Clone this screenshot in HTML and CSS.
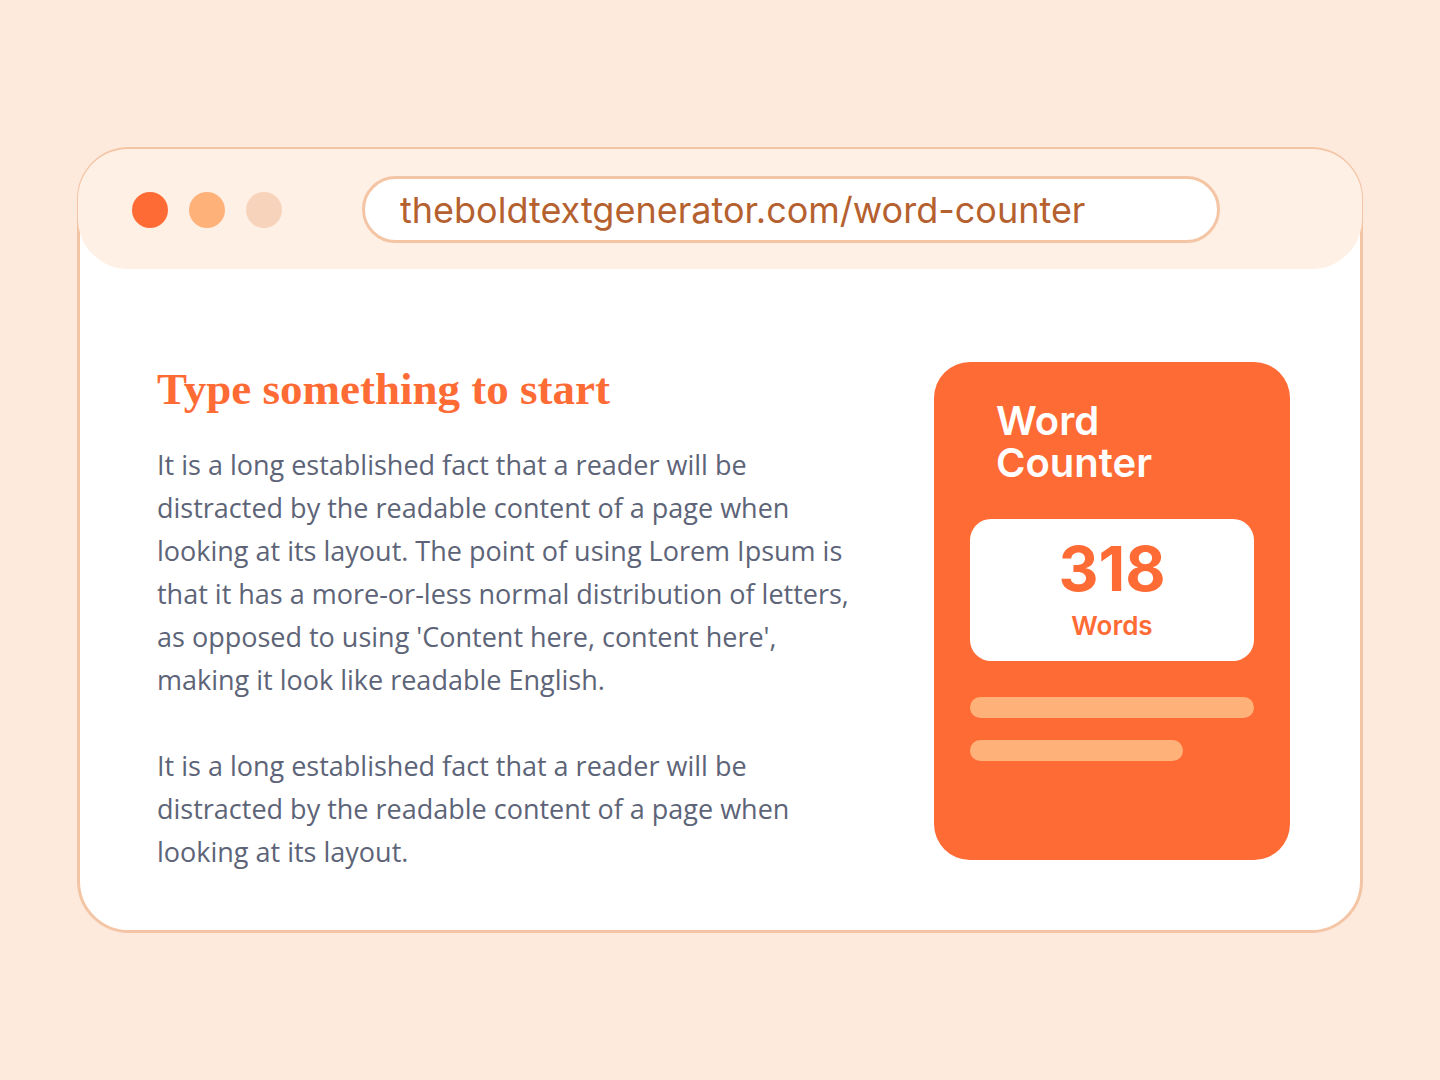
FILE: index.html
```html
<!DOCTYPE html>
<html lang="en">
<head>
  <meta charset="UTF-8">
  <meta name="viewport" content="width=device-width, initial-scale=1.0">
  <title>Word Counter</title>
  <link rel="stylesheet" href="styles.css">
</head>
<body>
  <div class="window">
    <!-- Title bar -->
    <header class="bar">
      <div class="dots">
        <span class="dot red"></span>
        <span class="dot orange"></span>
        <span class="dot pale"></span>
      </div>
      <input class="address" type="text" aria-label="Address" value="theboldtextgenerator.com/word-counter">
    </header>

    <main class="content">
      <section class="text">
        <h1>Type something to start</h1>
        <p>It is a long established fact that a reader will be distracted by the readable content of a page when looking at its layout. The point of using Lorem Ipsum is that it has a more-or-less normal distribution of letters, as opposed to using 'Content here, content here', making it look like readable English.</p>
        <p>It is a long established fact that a reader will be distracted by the readable content of a page when looking at its layout.</p>
      </section>

      <!-- Counter card -->
      <aside class="card">
        <h2>Word<br>Counter</h2>
        <div class="count">
          <strong>318</strong>
          <span>Words</span>
        </div>
        <div class="line"></div>
        <div class="line short"></div>
      </aside>
    </main>
  </div>
</body>
</html>
```
FILE: styles.css
```css
* {
  box-sizing: border-box;
}
body {
  margin: 0;
  min-height: 100vh;
  padding: 0 77px;
  display: flex;
  align-items: center;
  background: #fdeadc;
  font-family: Inter, sans-serif;
}
.window {
  width: 100%;
  background: white;
  border: 3px solid #f4c5a5;
  border-radius: 52px;
}
.bar {
  display: flex;
  align-items: center;
  gap: 80px;
  margin: -1px -2px 0;
  padding: 27px 142px 26px 54px;
  background: #fff0e5;
  border-radius: 50px;
}
.dots {
  display: flex;
  gap: 21px;
}
.dot {
  width: 36px;
  height: 36px;
  border-radius: 50%;
}
.red {
  background: #ff6b35;
}
.orange {
  background: #ffb17a;
}
.pale {
  background: #f8d3bc;
}
.address {
  flex: 1;
  min-width: 0;
  height: 67px;
  padding: 0 35px;
  border: 3px solid #f4c5a5;
  border-radius: 34px;
  background: white;
  color: #b5612f;
  font-family: Inter, sans-serif;
  font-size: 36px;
}
.content {
  display: flex;
  justify-content: space-between;
  align-items: flex-start;
  gap: 60px;
  padding: 93px 70px 57px 77px;
}
.text {
  flex: 1;
  max-width: 716px;
}
h1 {
  margin: 0 0 27px;
  color: #ff6b35;
  font-family: "Liberation Serif", serif;
  font-size: 45px;
  line-height: 54px;
}
p {
  margin: 0 0 43px;
  color: #5d6478;
  font-family: "Open Sans", sans-serif;
  font-size: 27px;
  line-height: 43px;
}
p:last-child {
  margin-bottom: 0;
}
.card {
  width: 356px;
  padding: 38px 36px 99px;
  background: #ff6b35;
  border-radius: 36px;
}
h2 {
  margin: 0 0 35px;
  padding-left: 26px;
  color: white;
  font-size: 40px;
  font-weight: 600;
  line-height: 42px;
}
.count {
  display: flex;
  flex-direction: column;
  align-items: center;
  gap: 2px;
  margin-bottom: 36px;
  padding: 13px 0 17px;
  background: white;
  border-radius: 21px;
  color: #ff6b35;
}
.count strong {
  font-size: 62px;
  line-height: 74px;
}
.count span {
  font-size: 26px;
  font-weight: 600;
  line-height: 36px;
}
.line {
  height: 21px;
  margin-bottom: 22px;
  background: #ffb17a;
  border-radius: 11px;
}
.short {
  width: 75%;
  margin-bottom: 0;
}
```
